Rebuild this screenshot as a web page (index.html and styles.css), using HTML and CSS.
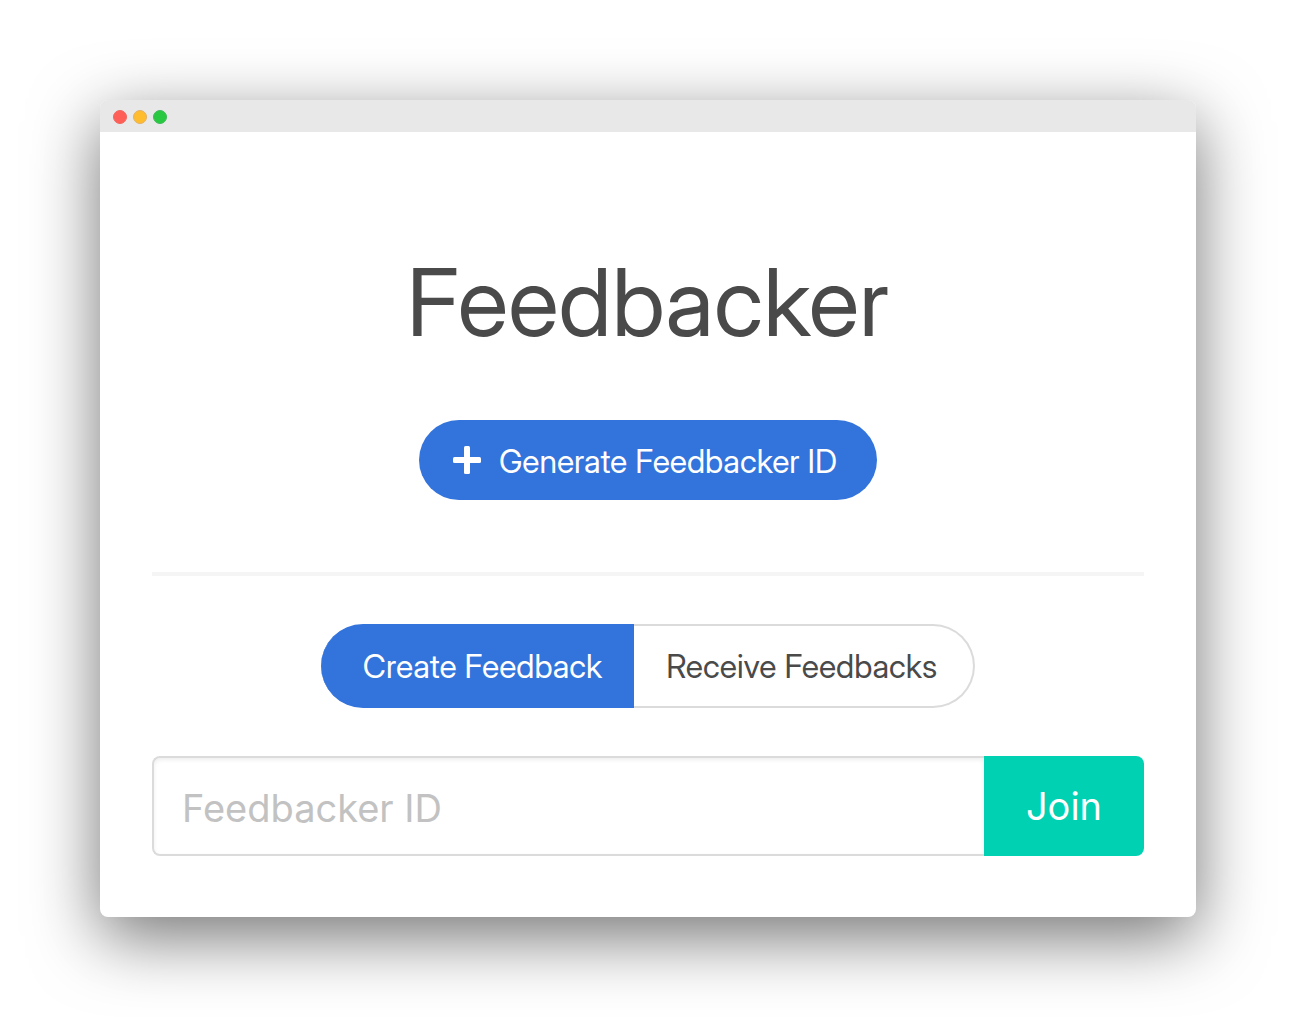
FILE: index.html
```html
<!DOCTYPE html>
<html lang="en">
<head>
  <meta charset="utf-8">
  <meta name="viewport" content="width=device-width, initial-scale=1">
  <title>Feedbacker</title>
  <link rel="stylesheet" href="styles.css">
</head>
<body>
  <div class="window">
    <div class="titlebar">
      <span class="dot dot-close"></span>
      <span class="dot dot-minimize"></span>
      <span class="dot dot-zoom"></span>
    </div>
    <main class="content">
      <h1 class="title">Feedbacker</h1>
      <button class="generate" type="button">
        <svg class="plus" viewBox="0 0 28 28" aria-hidden="true">
          <rect x="0" y="11" width="28" height="6" rx="1.5"/>
          <rect x="11" y="0" width="6" height="28" rx="1.5"/>
        </svg>
        <span>Generate Feedbacker ID</span>
      </button>
      <hr class="divider">
      <div class="tabs">
        <button class="tab tab-active" type="button">Create Feedback</button>
        <button class="tab" type="button">Receive Feedbacks</button>
      </div>
      <form class="join">
        <input class="join-input" type="text" placeholder="Feedbacker ID" aria-label="Feedbacker ID">
        <button class="join-button" type="button">Join</button>
      </form>
    </main>
  </div>
</body>
</html>
```

FILE: styles.css
```css
* {
  box-sizing: border-box;
}

body {
  margin: 0;
  padding: 100px;
  background: #fff;
  color: #4a4a4a;
  font-family: "Inter Display", "Inter Tight", Inter, "Liberation Sans", sans-serif;
}

button,
input {
  margin: 0;
  font-family: inherit;
}

button {
  cursor: pointer;
}

.window {
  overflow: hidden;
  border-radius: 8px;
  background: #fff;
  box-shadow: 0 20px 68px rgba(0, 0, 0, 0.55);
}

.titlebar {
  display: flex;
  align-items: center;
  gap: 6px;
  height: 32px;
  padding: 2px 13px 0;
  background: #e8e8e8;
}

.dot {
  width: 14px;
  height: 14px;
  border: 1px solid;
  border-radius: 50%;
}

.dot-close {
  border-color: #f0665f;
  background: #ff5f57;
}

.dot-minimize {
  border-color: #e3b062;
  background: #ffbd2e;
}

.dot-zoom {
  border-color: #3fb858;
  background: #28c940;
}

.content {
  display: flex;
  flex-direction: column;
  align-items: center;
  padding: 116px 52px 61px;
}

.title {
  margin: 0 0 64px;
  font-size: 94px;
  font-weight: 400;
  line-height: 108px;
}

.generate {
  display: flex;
  align-items: center;
  justify-content: center;
  gap: 18px;
  height: 80px;
  padding: 2px 40px 0 34px;
  border: 0;
  border-radius: 40px;
  background: #3273dc;
  color: #fff;
  font-size: 32px;
}

.plus {
  width: 28px;
  height: 28px;
  margin-bottom: 2px;
  fill: currentColor;
}

.divider {
  width: 100%;
  height: 4px;
  margin: 72px 0 48px;
  border: 0;
  background: #f5f5f5;
}

.tabs {
  display: flex;
  margin-bottom: 48px;
}

.tab {
  height: 84px;
  padding: 0 36px 0 32px;
  border: 2px solid #dbdbdb;
  border-left: 0;
  border-radius: 0 42px 42px 0;
  background: #fff;
  color: #4a4a4a;
  font-size: 32px;
}

.tab-active {
  padding: 0 30px 0 42px;
  border-color: #3273dc;
  border-radius: 42px 0 0 42px;
  background: #3273dc;
  color: #fff;
}

.join {
  display: flex;
  width: 100%;
  font-family: Inter, "Liberation Sans", sans-serif;
}

.join-input {
  flex: 1;
  min-width: 0;
  height: 100px;
  padding: 4px 28px 0;
  border: 2px solid #dbdbdb;
  border-right: 0;
  border-radius: 8px 0 0 8px;
  background: #fff;
  box-shadow: inset 0 2px 4px rgba(10, 10, 10, 0.07);
  color: #363636;
  font-size: 38px;
}

.join-input::placeholder {
  color: #c2c2c2;
  opacity: 1;
}

.join-button {
  width: 160px;
  height: 100px;
  padding: 0;
  border: 0;
  border-radius: 0 8px 8px 0;
  background: #00d1b2;
  color: #fff;
  font-size: 38px;
}
```
